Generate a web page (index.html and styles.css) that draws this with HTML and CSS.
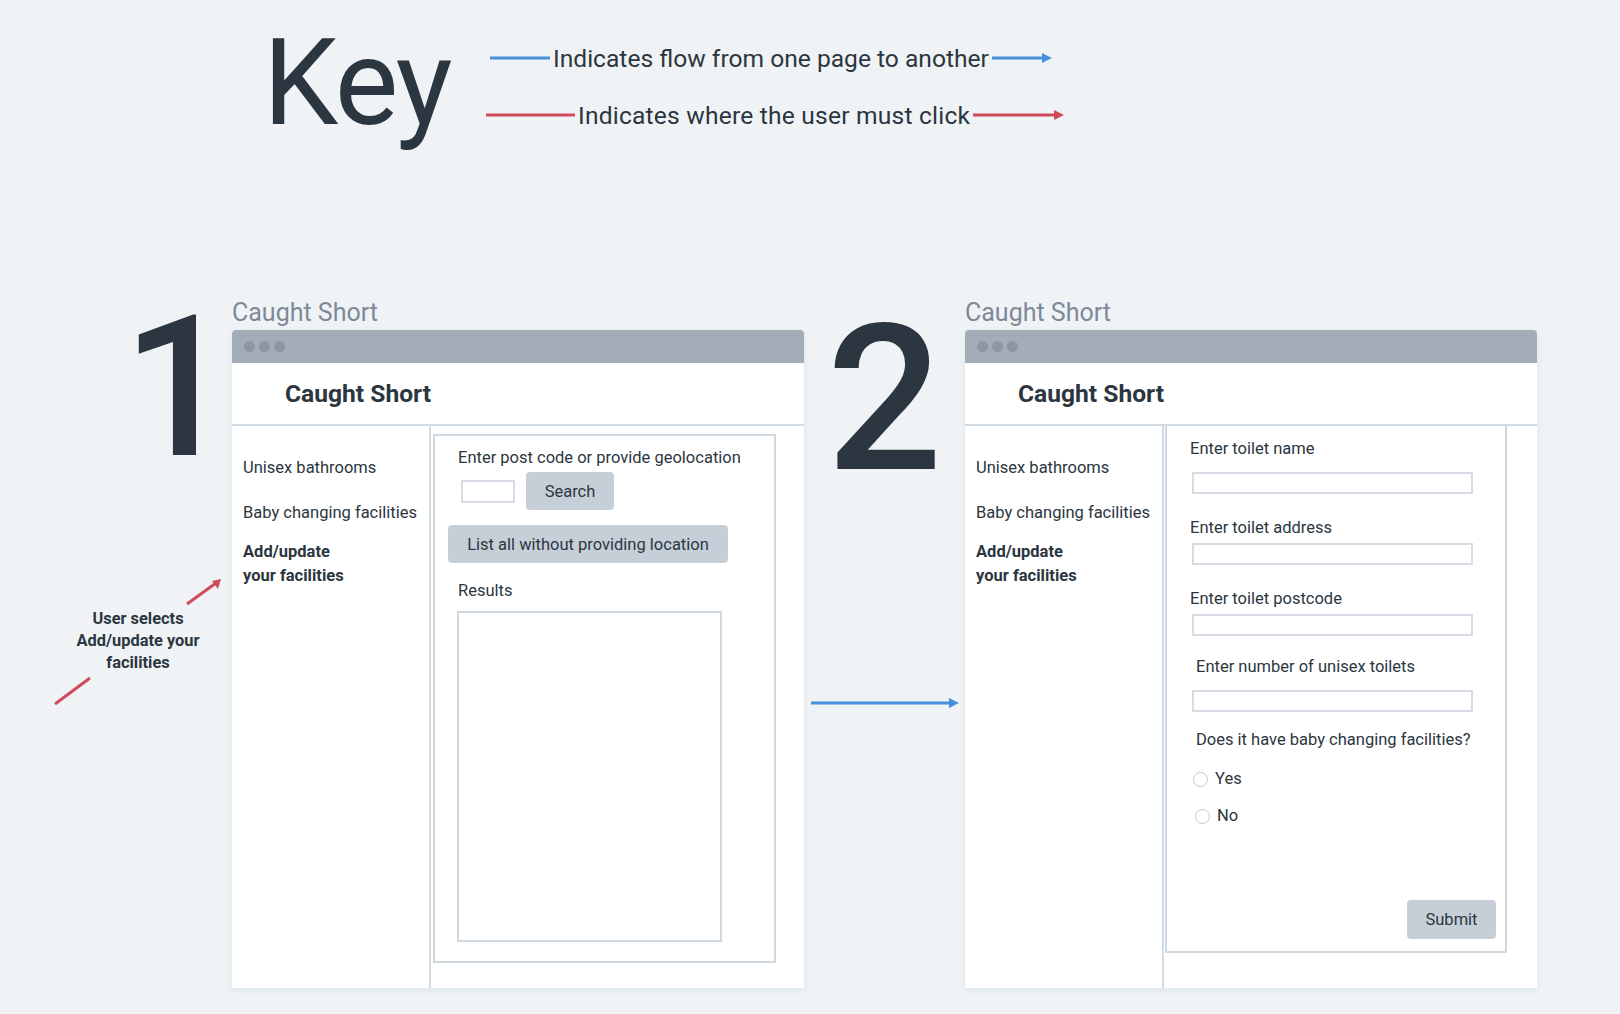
FILE: index.html
```html
<!DOCTYPE html>
<html lang="en">
<head>
    <meta charset="UTF-8">
    <meta name="viewport" content="width=device-width, initial-scale=1.0">
    <title>Caught Short - User Flow</title>
    <link rel="stylesheet" href="styles.css">
</head>
<body>
    <header class="key">
        <h1 class="key-title">Key</h1>
        <div class="legend">
            <div class="legend-row flow">
                <svg class="lead" width="60" height="12"><line x1="0" y1="6" x2="60" y2="6"/></svg>
                <span>Indicates flow from one page to another</span>
                <svg width="60" height="12"><line x1="0" y1="6" x2="52" y2="6"/><polygon points="50,1 60,6 50,11"/></svg>
            </div>
            <div class="legend-row click">
                <svg width="89" height="12"><line x1="0" y1="6" x2="89" y2="6"/></svg>
                <span>Indicates where the user must click</span>
                <svg width="91" height="12"><line x1="0" y1="6" x2="83" y2="6"/><polygon points="81,1 91,6 81,11"/></svg>
            </div>
        </div>
    </header>

    <main class="flows">
        <div class="lead-col">
            <div class="step-num">1</div>
            <div class="note">
                <svg class="click-line" width="192" height="29"><line x1="147" y1="26" x2="176" y2="5"/><polygon points="181,1 178,11 172,3"/></svg>
                <p>User selects<br>Add/update your<br>facilities</p>
                <svg class="click-line" width="192" height="32"><line x1="15" y1="30" x2="50" y2="4"/></svg>
            </div>
        </div>

        <section class="screen">
            <div class="screen-label">Caught Short</div>
            <div class="window">
                <div class="titlebar"><span></span><span></span><span></span></div>
                <div class="app-header">Caught Short</div>
                <div class="app-body">
                    <nav class="sidebar">
                        <a href="#">Unisex bathrooms</a>
                        <a href="#">Baby changing facilities</a>
                        <a href="#" class="current">Add/update<br>your facilities</a>
                    </nav>
                    <div class="main">
                        <div class="search-box">
                            <p class="label">Enter post code or provide geolocation</p>
                            <div class="search-row">
                                <span class="input small"></span>
                                <button class="btn search">Search</button>
                            </div>
                            <button class="btn list-all">List all without providing location</button>
                            <p class="label results-label">Results</p>
                            <div class="results"></div>
                        </div>
                    </div>
                </div>
            </div>
        </section>

        <div class="between">
            <div class="step-num two">2</div>
            <svg class="flow-line" width="161" height="14"><line x1="7" y1="7" x2="147" y2="7"/><polygon points="145,2 155,7 145,12"/></svg>
        </div>

        <section class="screen">
            <div class="screen-label">Caught Short</div>
            <div class="window">
                <div class="titlebar"><span></span><span></span><span></span></div>
                <div class="app-header">Caught Short</div>
                <div class="app-body">
                    <nav class="sidebar">
                        <a href="#">Unisex bathrooms</a>
                        <a href="#">Baby changing facilities</a>
                        <a href="#" class="current">Add/update<br>your facilities</a>
                    </nav>
                    <div class="main">
                        <form class="form-box">
                            <p class="label">Enter toilet name</p>
                            <span class="input wide loose"></span>
                            <p class="label">Enter toilet address</p>
                            <span class="input wide"></span>
                            <p class="label">Enter toilet postcode</p>
                            <span class="input wide"></span>
                            <p class="label indent raised">Enter number of unisex toilets</p>
                            <span class="input wide loose"></span>
                            <p class="label indent question">Does it have baby changing facilities?</p>
                            <label class="radio-row"><span class="radio"></span>Yes</label>
                            <label class="radio-row no"><span class="radio"></span>No</label>
                            <button class="btn submit" type="button">Submit</button>
                        </form>
                    </div>
                </div>
            </div>
        </section>
    </main>
</body>
</html>
```

FILE: styles.css
```css
body {
    margin: 0;
    padding: 0;
    width: 1620px;
    height: 1014px;
    overflow: hidden;
    background-color: #eff3f6;
    font-family: Roboto, "Noto Sans", sans-serif;
    color: #2b3640;
}

p {
    margin: 0;
}

/* key */

.key {
    box-sizing: border-box;
    height: 298px;
    padding: 23px 0 0 263px;
    display: flex;
    align-items: flex-start;
}

.key-title {
    width: 223px;
    margin: 0;
    font-size: 120px;
    font-weight: 400;
    line-height: 1;
    letter-spacing: -2px;
}

.legend {
    margin-top: 20px;
    display: flex;
    flex-direction: column;
    gap: 27px;
}

.legend-row {
    display: flex;
    align-items: center;
    height: 30px;
    font-size: 24.6px;
}

.legend-row span {
    margin: 0 3px;
}

.legend-row.flow {
    padding-left: 4px;
}

.legend-row.click span {
    letter-spacing: 0.2px;
}

.flow line, .flow-line line {
    stroke: #4a8fdc;
    stroke-width: 3;
}

.flow polygon, .flow-line polygon {
    fill: #4a8fdc;
}

.click line, .click-line line {
    stroke: #cf4b5b;
    stroke-width: 3;
}

.click polygon, .click-line polygon {
    fill: #cf4b5b;
}

/* flows */

.flows {
    display: flex;
    align-items: flex-start;
    padding-left: 40px;
}

.lead-col {
    width: 192px;
    display: flex;
    flex-direction: column;
}

.step-num {
    font-size: 196px;
    font-weight: 500;
    line-height: 1;
    text-align: right;
    margin-right: -2px;
    margin-top: -8px;
}

.step-num.two {
    font-size: 204px;
    text-align: center;
    margin-right: 0;
    margin-top: 0;
}

.note {
    margin-top: 92px;
    text-align: center;
}

.note svg {
    display: block;
}

.note p {
    margin: 1px 0 0 4px;
    font-size: 16.4px;
    font-weight: 700;
    line-height: 22px;
}

.between {
    width: 161px;
    display: flex;
    flex-direction: column;
}

.flow-line {
    display: block;
    margin-top: 194px;
}

/* browser windows */

.screen {
    width: 572px;
}

.screen-label {
    font-size: 25px;
    line-height: 30px;
    color: #7d8996;
    margin-bottom: 2px;
}

.window {
    background-color: white;
    border-radius: 4px 4px 0 0;
    box-shadow: 0 2px 6px rgba(40, 60, 80, 0.08);
}

.titlebar {
    height: 33px;
    background-color: #a2adb8;
    border-radius: 4px 4px 0 0;
    display: flex;
    align-items: center;
    gap: 4px;
    padding-left: 12px;
}

.titlebar span {
    width: 11px;
    height: 11px;
    border-radius: 50%;
    background-color: #8c97a3;
}

.app-header {
    height: 61px;
    line-height: 61px;
    padding-left: 53px;
    font-size: 24.6px;
    font-weight: 700;
    border-bottom: 2px solid #d3dbe2;
}

.app-body {
    display: flex;
    height: 562px;
}

.sidebar {
    width: 186px;
    padding: 30px 0 0 11px;
    border-right: 2px solid #d3dbe2;
    display: flex;
    flex-direction: column;
}

.sidebar a {
    color: #2b3640;
    text-decoration: none;
    font-size: 16.5px;
    line-height: 24px;
    white-space: nowrap;
}

.sidebar a + a {
    margin-top: 21px;
}

.sidebar a.current {
    margin-top: 15px;
    font-weight: 700;
}

.main {
    flex: 1;
}

.label {
    font-size: 16.5px;
    line-height: 20px;
}

.input {
    display: block;
    box-sizing: border-box;
    background-color: white;
    border: 2px solid #d5dce3;
}

.input.small {
    width: 54px;
    height: 23px;
    margin-left: 3px;
}

.btn {
    border: none;
    border-radius: 4px;
    background-color: #c6cfd8;
    color: #2b3640;
    font-family: Roboto, "Noto Sans", sans-serif;
    font-size: 16.5px;
    padding: 0;
    height: 38px;
}

/* search page */

.search-box {
    box-sizing: border-box;
    width: 343px;
    height: 529px;
    margin: 8px 0 0 2px;
    border: 2px solid #d0d8e0;
    padding: 12px 0 0 23px;
}

.search-row {
    display: flex;
    align-items: center;
    gap: 11px;
    margin-top: 4px;
}

.btn.search {
    width: 88px;
}

.btn.list-all {
    display: block;
    width: 280px;
    margin: 15px 0 0 -10px;
}

.results-label {
    margin-top: 18px;
}

.results {
    box-sizing: border-box;
    width: 265px;
    height: 331px;
    margin: 10px 0 0 -1px;
    border: 2px solid #d0d8e0;
}

/* add/update page */

.form-box {
    box-sizing: border-box;
    width: 342px;
    height: 527px;
    margin: 0 0 0 1px;
    border: 2px solid #d0d8e0;
    border-top: none;
    padding: 13px 0 12px 23px;
    display: flex;
    flex-direction: column;
    align-items: flex-start;
}

.input.wide {
    width: 281px;
    height: 22px;
    margin: 5px 0 24px 2px;
}

.input.wide.loose {
    margin-top: 13px;
}

.label.indent {
    margin-left: 6px;
}

.label.raised {
    margin-top: -3px;
}

.label.question {
    margin-top: -6px;
}

.radio-row {
    display: flex;
    align-items: center;
    gap: 7px;
    font-size: 16.5px;
    line-height: 20px;
    margin-top: 19px;
    margin-left: 3px;
}

.radio-row.no {
    margin-top: 17px;
    margin-left: 5px;
}

.radio {
    box-sizing: border-box;
    width: 15px;
    height: 15px;
    border-radius: 50%;
    border: 1.5px solid #c0c9d2;
    background-color: white;
}

.btn.submit {
    width: 89px;
    height: 39px;
    margin-top: auto;
    align-self: flex-end;
    margin-right: 9px;
}
```
